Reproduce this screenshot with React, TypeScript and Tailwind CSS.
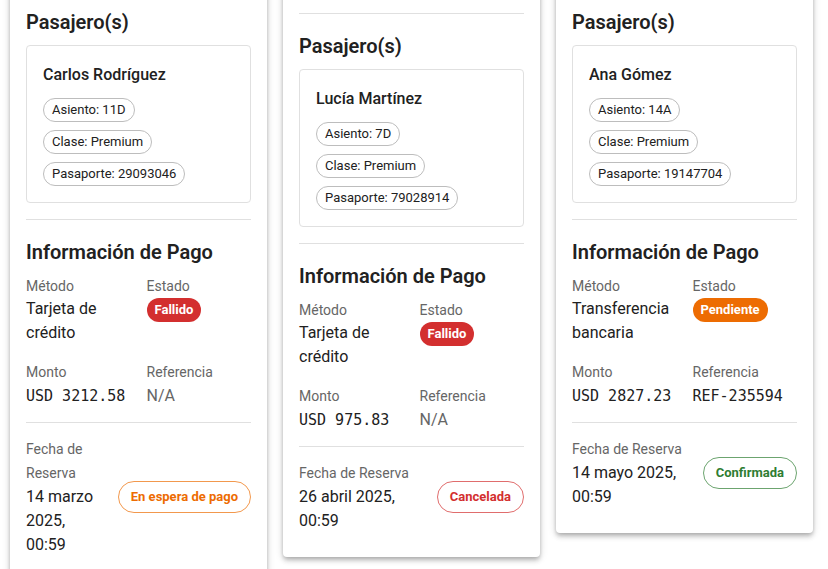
import React from 'react';

type Booking = {
  name: string;
  seat: string;
  cls: string;
  passport: string;
  method: string;
  payStatus: 'Fallido' | 'Pendiente';
  amount: string;
  reference: string | null;
  date: string;
  status: 'En espera de pago' | 'Cancelada' | 'Confirmada';
  extraTop?: boolean;
};

const bookings: Booking[] = [
  {
    name: 'Carlos Rodríguez',
    seat: '11D',
    cls: 'Premium',
    passport: '29093046',
    method: 'Tarjeta de crédito',
    payStatus: 'Fallido',
    amount: 'USD 3212.58',
    reference: null,
    date: '14 marzo 2025, 00:59',
    status: 'En espera de pago',
  },
  {
    name: 'Lucía Martínez',
    seat: '7D',
    cls: 'Premium',
    passport: '79028914',
    method: 'Tarjeta de crédito',
    payStatus: 'Fallido',
    amount: 'USD 975.83',
    reference: null,
    date: '26 abril 2025, 00:59',
    status: 'Cancelada',
    extraTop: true,
  },
  {
    name: 'Ana Gómez',
    seat: '14A',
    cls: 'Premium',
    passport: '19147704',
    method: 'Transferencia bancaria',
    payStatus: 'Pendiente',
    amount: 'USD 2827.23',
    reference: 'REF-235594',
    date: '14 mayo 2025, 00:59',
    status: 'Confirmada',
  },
];

const payChip = {
  Fallido: 'bg-[#d32f2f]',
  Pendiente: 'bg-[#ed6c02]',
};

const statusChip = {
  'En espera de pago': 'text-[#ed6c02] border-[#ed6c02]/70',
  Cancelada: 'text-[#d32f2f] border-[#d32f2f]/70',
  Confirmada: 'text-[#2e7d32] border-[#2e7d32]/70',
};

function InfoChip({ children }: { children: React.ReactNode }) {
  return (
    <span className="inline-flex items-center h-6 px-2 rounded-full border border-[#bdbdbd] text-[13px] text-[#212121]">
      {children}
    </span>
  );
}

function Divider() {
  return <div className="h-px bg-[#e0e0e0]" />;
}

function BookingCard({ b }: { b: Booking }) {
  return (
    <div className="bg-white rounded shadow-[0_2px_4px_-1px_rgba(0,0,0,0.2),0_4px_5px_0_rgba(0,0,0,0.14),0_1px_10px_0_rgba(0,0,0,0.12)]">
      <div className={`px-4 pb-6 ${b.extraTop ? 'pt-10' : 'pt-4'}`}>
        <Divider />

        {/* Pasajeros */}
        <div className="mt-4">
          <h6 className="text-xl leading-8 font-semibold text-[#212121] mb-[7px]">Pasajero(s)</h6>
          <div className="border border-[#e0e0e0] rounded p-4">
            <div className="text-base leading-[26px] font-medium text-[#212121] mb-[10px]">{b.name}</div>
            <div className="flex flex-col items-start gap-2">
              <InfoChip>Asiento: {b.seat}</InfoChip>
              <InfoChip>Clase: {b.cls}</InfoChip>
              <InfoChip>Pasaporte: {b.passport}</InfoChip>
            </div>
          </div>
        </div>

        <div className="my-4">
          <Divider />
        </div>

        {/* Pago */}
        <h6 className="text-xl leading-8 font-semibold text-[#212121] mb-2">Información de Pago</h6>
        <div className="grid grid-cols-2 gap-x-4 gap-y-[17px]">
          <div>
            <div className="text-sm leading-5 text-[#666] mb-px">Método</div>
            <div className="text-base leading-6 text-[#212121]">{b.method}</div>
          </div>
          <div>
            <div className="text-sm leading-5 text-[#666] mb-px">Estado</div>
            <span className={`inline-flex items-center h-6 px-2 rounded-full text-[13px] font-bold text-white ${payChip[b.payStatus]}`}>
              {b.payStatus}
            </span>
          </div>
          <div>
            <div className="text-sm leading-5 text-[#666] mb-0.5">Monto</div>
            <div className="text-[15px] leading-6 text-[#212121] font-['DejaVu_Sans_Mono',monospace]">{b.amount}</div>
          </div>
          <div>
            <div className="text-sm leading-5 text-[#666] mb-0.5">Referencia</div>
            {b.reference ? (
              <div className="text-[15px] leading-6 text-[#212121] font-['DejaVu_Sans_Mono',monospace]">{b.reference}</div>
            ) : (
              <div className="text-base leading-6 text-[#666]">N/A</div>
            )}
          </div>
        </div>

        <div className="mt-[14px] mb-[14px]">
          <Divider />
        </div>

        {/* Reserva */}
        <div className="flex items-center justify-between gap-4">
          <div>
            <div className="text-sm leading-6 text-[#666]">Fecha de Reserva</div>
            <div className="text-base leading-6 text-[#212121]">{b.date}</div>
          </div>
          <span
            className={`shrink-0 inline-flex items-center h-8 px-3 rounded-full border text-[13px] font-bold whitespace-nowrap ${statusChip[b.status]}`}
          >
            {b.status}
          </span>
        </div>
      </div>
    </div>
  );
}

export default function App() {
  return (
    <div className="h-[569px] overflow-hidden bg-white font-['Roboto',sans-serif]">
      <div className="grid grid-cols-3 items-start gap-4 pl-[10px] pr-[15px] -mt-[27px]">
        {bookings.map((b) => (
          <BookingCard key={b.name} b={b} />
        ))}
      </div>
    </div>
  );
}
